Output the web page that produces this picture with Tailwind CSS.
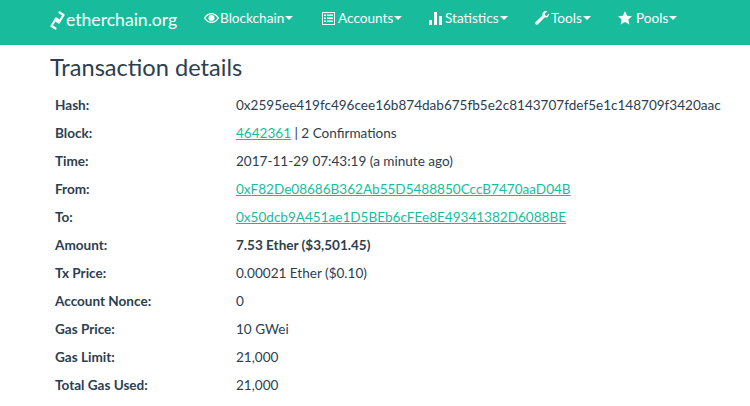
<!DOCTYPE html>
<html lang="en">
<head>
<meta charset="UTF-8">
<title>Transaction details - etherchain.org</title>
<script src="https://cdn.jsdelivr.net/npm/@tailwindcss/browser@4"></script>
</head>
<body class="bg-white font-['Lato',sans-serif] text-[#2c3e50] overflow-hidden h-[406px]">
<nav class="h-[45px] bg-[#18bc9c] text-white flex items-start pl-[50px]">
  <a href="#" class="flex items-center h-[40px] text-[17.6px] w-[154px]">
    <svg class="w-[15px] h-[19px] mr-[1px]" viewBox="0 0 15 19" fill="none" stroke="white" stroke-width="2.200" stroke-linecap="round" stroke-linejoin="round"><path d="M9.500 1.500 L13.500 4 L9 11.500 L6.500 10 M5.500 17.500 L1.500 15 L6 7.500 L8.500 9"/></svg>
    etherchain.org
  </a>
  <ul class="flex items-center h-[37px] text-[13.6px]">
    <li class="flex items-center w-[118px]">
      <svg class="w-[15px] h-[12px] mr-[1px]" viewBox="0 0 15 12" fill="white"><path fill-rule="evenodd" d="M7.500 1C11 1 13.700 3.500 15 6c-1.300 2.500-4 5-7.500 5S1.300 8.500 0 6c1.300-2.500 4-5 7.500-5zM7.500 2.200C5 2.200 2.800 4 1.500 6c1.300 2 3.500 3.800 6 3.800s4.700-1.800 6-3.800c-1.300-2-3.500-3.800-6-3.800zM7.500 3a3 3 0 1 1 0 6 3 3 0 0 1 0-6z"/></svg>
      Blockchain<span class="ml-[1px] border-x-[4px] border-x-transparent border-t-[4px] border-t-white"></span>
    </li>
    <li class="flex items-center w-[107px]">
      <svg class="w-[13px] h-[13px] mr-[3px]" viewBox="0 0 13 13" fill="white"><path fill-rule="evenodd" d="M0 0h13v13H0zM1 1v11h11V1zM2 2.500h2v1.500H2zM5 2.500h6v1.500H5zM2 5.500h2v1.500H2zM5 5.500h6v1.500H5zM2 8.500h2v1.500H2zM5 8.500h6v1.500H5z"/></svg>
      Accounts<span class="ml-[1px] border-x-[4px] border-x-transparent border-t-[4px] border-t-white"></span>
    </li>
    <li class="flex items-center w-[106px]">
      <svg class="w-[13px] h-[13px] mr-[3px]" viewBox="0 0 13 13" fill="white"><path d="M0 8h3v5H0zM5 0h3v13H5zM10 4h3v9h-3z"/></svg>
      Statistics<span class="ml-[1px] border-x-[4px] border-x-transparent border-t-[4px] border-t-white"></span>
    </li>
    <li class="flex items-center w-[83px]">
      <svg class="w-[14px] h-[14px] mr-[2px]" viewBox="0 0 14 14" fill="white"><path d="M14 3.200c0 2.300-2.400 4-4.500 3.200L3 13.200a1.600 1.600 0 0 1-2.300-2.300L7.500 4.500C6.800 2.400 8.500 0 10.800 0c.5 0 1 .1 1.400.3L9.700 2.700l.5 1.700 1.700.5 1.900-2.400c.1.200.2.400.2.700z"/></svg>
      Tools<span class="ml-[1px] border-x-[4px] border-x-transparent border-t-[4px] border-t-white"></span>
    </li>
    <li class="flex items-center">
      <svg class="w-[14px] h-[14px] mr-[4px]" viewBox="0 0 24 24" fill="white"><path d="M12 0l3.600 8 8.400.9-6.300 5.700 1.800 8.400L12 18.700 4.500 23l1.800-8.400L0 8.900 8.400 8z"/></svg>
      Pools<span class="ml-[1px] border-x-[4px] border-x-transparent border-t-[4px] border-t-white"></span>
    </li>
  </ul>
</nav>
<main class="px-[50px]">
  <h1 class="text-[23.6px] leading-[30px] mt-[7px] mb-[9px]">Transaction details</h1>
  <dl class="grid grid-cols-[181px_1fr] auto-rows-[28px] items-center pl-[5px] text-[13.55px]">
    <dt class="font-bold">Hash:</dt><dd>0x2595ee419fc496cee16b874dab675fb5e2c8143707fdef5e1c148709f3420aac</dd>
    <dt class="font-bold">Block:</dt><dd><a href="#" class="text-[#18bc9c] underline">4642361</a> | 2 Confirmations</dd>
    <dt class="font-bold">Time:</dt><dd>2017-11-29 07:43:19 (a minute ago)</dd>
    <dt class="font-bold">From:</dt><dd><a href="#" class="text-[#18bc9c] underline">0xF82De08686B362Ab55D5488850CccB7470aaD04B</a></dd>
    <dt class="font-bold">To:</dt><dd><a href="#" class="text-[#18bc9c] underline">0x50dcb9A451ae1D5BEb6cFEe8E49341382D6088BE</a></dd>
    <dt class="font-bold">Amount:</dt><dd class="font-bold">7.53 Ether ($3,501.45)</dd>
    <dt class="font-bold">Tx Price:</dt><dd>0.00021 Ether ($0.10)</dd>
    <dt class="font-bold">Account Nonce:</dt><dd>0</dd>
    <dt class="font-bold">Gas Price:</dt><dd>10 GWei</dd>
    <dt class="font-bold">Gas Limit:</dt><dd>21,000</dd>
    <dt class="font-bold">Total Gas Used:</dt><dd>21,000</dd>
  </dl>
</main>
</body>
</html>
